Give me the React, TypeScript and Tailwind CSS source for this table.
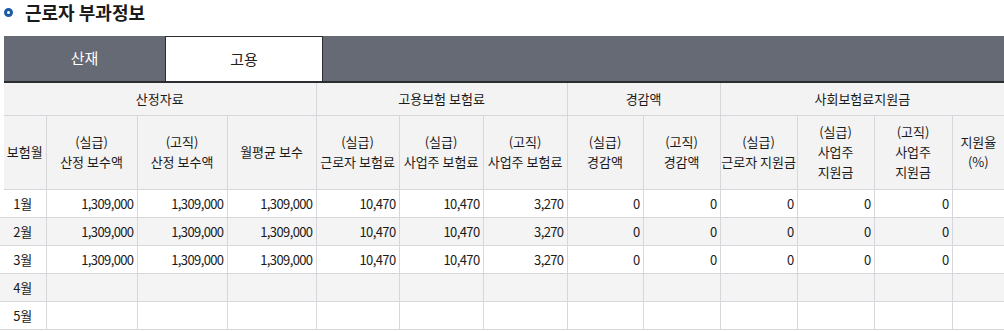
const font = { fontFamily: '"Noto Sans CJK KR", "Noto Sans", sans-serif' };

const colWidths = [42, 91, 90, 89, 83, 84, 84, 76, 77, 77, 77, 78, 52];

type Row = { month: string; values: string[] };

const rows: Row[] = [
  { month: "1월", values: ["1,309,000", "1,309,000", "1,309,000", "10,470", "10,470", "3,270", "0", "0", "0", "0", "0", ""] },
  { month: "2월", values: ["1,309,000", "1,309,000", "1,309,000", "10,470", "10,470", "3,270", "0", "0", "0", "0", "0", ""] },
  { month: "3월", values: ["1,309,000", "1,309,000", "1,309,000", "10,470", "10,470", "3,270", "0", "0", "0", "0", "0", ""] },
  { month: "4월", values: Array(12).fill("") },
  { month: "5월", values: Array(12).fill("") },
];

const subHeaders: string[][] = [
  ["보험월"],
  ["(실급)", "산정 보수액"],
  ["(고직)", "산정 보수액"],
  ["월평균 보수"],
  ["(실급)", "근로자 보험료"],
  ["(실급)", "사업주 보험료"],
  ["(고직)", "사업주 보험료"],
  ["(실급)", "경감액"],
  ["(고직)", "경감액"],
  ["(실급)", "근로자 지원금"],
  ["(실급)", "사업주", "지원금"],
  ["(고직)", "사업주", "지원금"],
  ["지원율", "(%)"],
];

function Cols({ first }: { first: number }) {
  return (
    <colgroup>
      {colWidths.map((w, i) => (
        <col key={i} style={{ width: i === 0 ? first : w }} />
      ))}
    </colgroup>
  );
}

export default function App() {
  return (
    <div className="w-[1004px] h-[331px] overflow-hidden bg-white text-[#222]" style={font}>
      <div className="flex items-center h-[24px] pl-1">
        <span className="w-[9px] h-[9px] rounded-full border-[3px] border-[#1d5ba6]" />
        <h2 className="ml-3 text-[18px] font-bold leading-none text-[#1a1a1a]">근로자 부과정보</h2>
      </div>

      <div className="mt-3 ml-1 flex h-[47px] bg-[#656a74] border-b-2 border-[#2b2d31]">
        <div className="w-[161px] flex items-center justify-center text-[15px] text-white">산재</div>
        <div className="w-[158px] flex items-center justify-center text-[15px] text-[#222] bg-white border border-b-0 border-[#2b2d31]">
          고용
        </div>
      </div>

      <table className="ml-1 table-fixed border-collapse text-[13px] text-[#1a1a1a] bg-[#f3f3f3] w-[1000px]">
        <Cols first={42} />
        <thead>
          <tr className="h-[32px]">
            <th colSpan={4} className="font-normal border-r border-b border-[#d6d6dc]">산정자료</th>
            <th colSpan={3} className="font-normal border-r border-b border-[#d6d6dc]">고용보험 보험료</th>
            <th colSpan={2} className="font-normal border-r border-b border-[#d6d6dc]">경감액</th>
            <th colSpan={4} className="font-normal border-b border-[#d6d6dc]">사회보험료지원금</th>
          </tr>
          <tr className="h-[74px]">
            {subHeaders.map((lines, i) => (
              <th
                key={i}
                className="font-normal leading-[20px] whitespace-nowrap overflow-hidden border-r border-b border-[#d6d6dc] last:border-r-0"
              >
                {lines.map((l, j) => (
                  <div key={j}>{l}</div>
                ))}
              </th>
            ))}
          </tr>
        </thead>
      </table>

      <table className="table-fixed border-collapse text-[13px] text-[#1a1a1a] w-[1004px]">
        <Cols first={46} />
        <tbody>
          {rows.map((r, i) => (
            <tr key={r.month} className={`h-[28px] ${i % 2 === 1 ? "bg-[#f4f4f4]" : "bg-white"}`}>
              <td className="text-center border-r border-b border-[#d6d6dc]">{r.month}</td>
              {r.values.map((v, j) => (
                <td
                  key={j}
                  className="text-right pr-[3px] tracking-[-0.6px] border-r border-b border-[#d6d6dc] last:border-r-0"
                >
                  {v}
                </td>
              ))}
            </tr>
          ))}
        </tbody>
      </table>
    </div>
  );
}
